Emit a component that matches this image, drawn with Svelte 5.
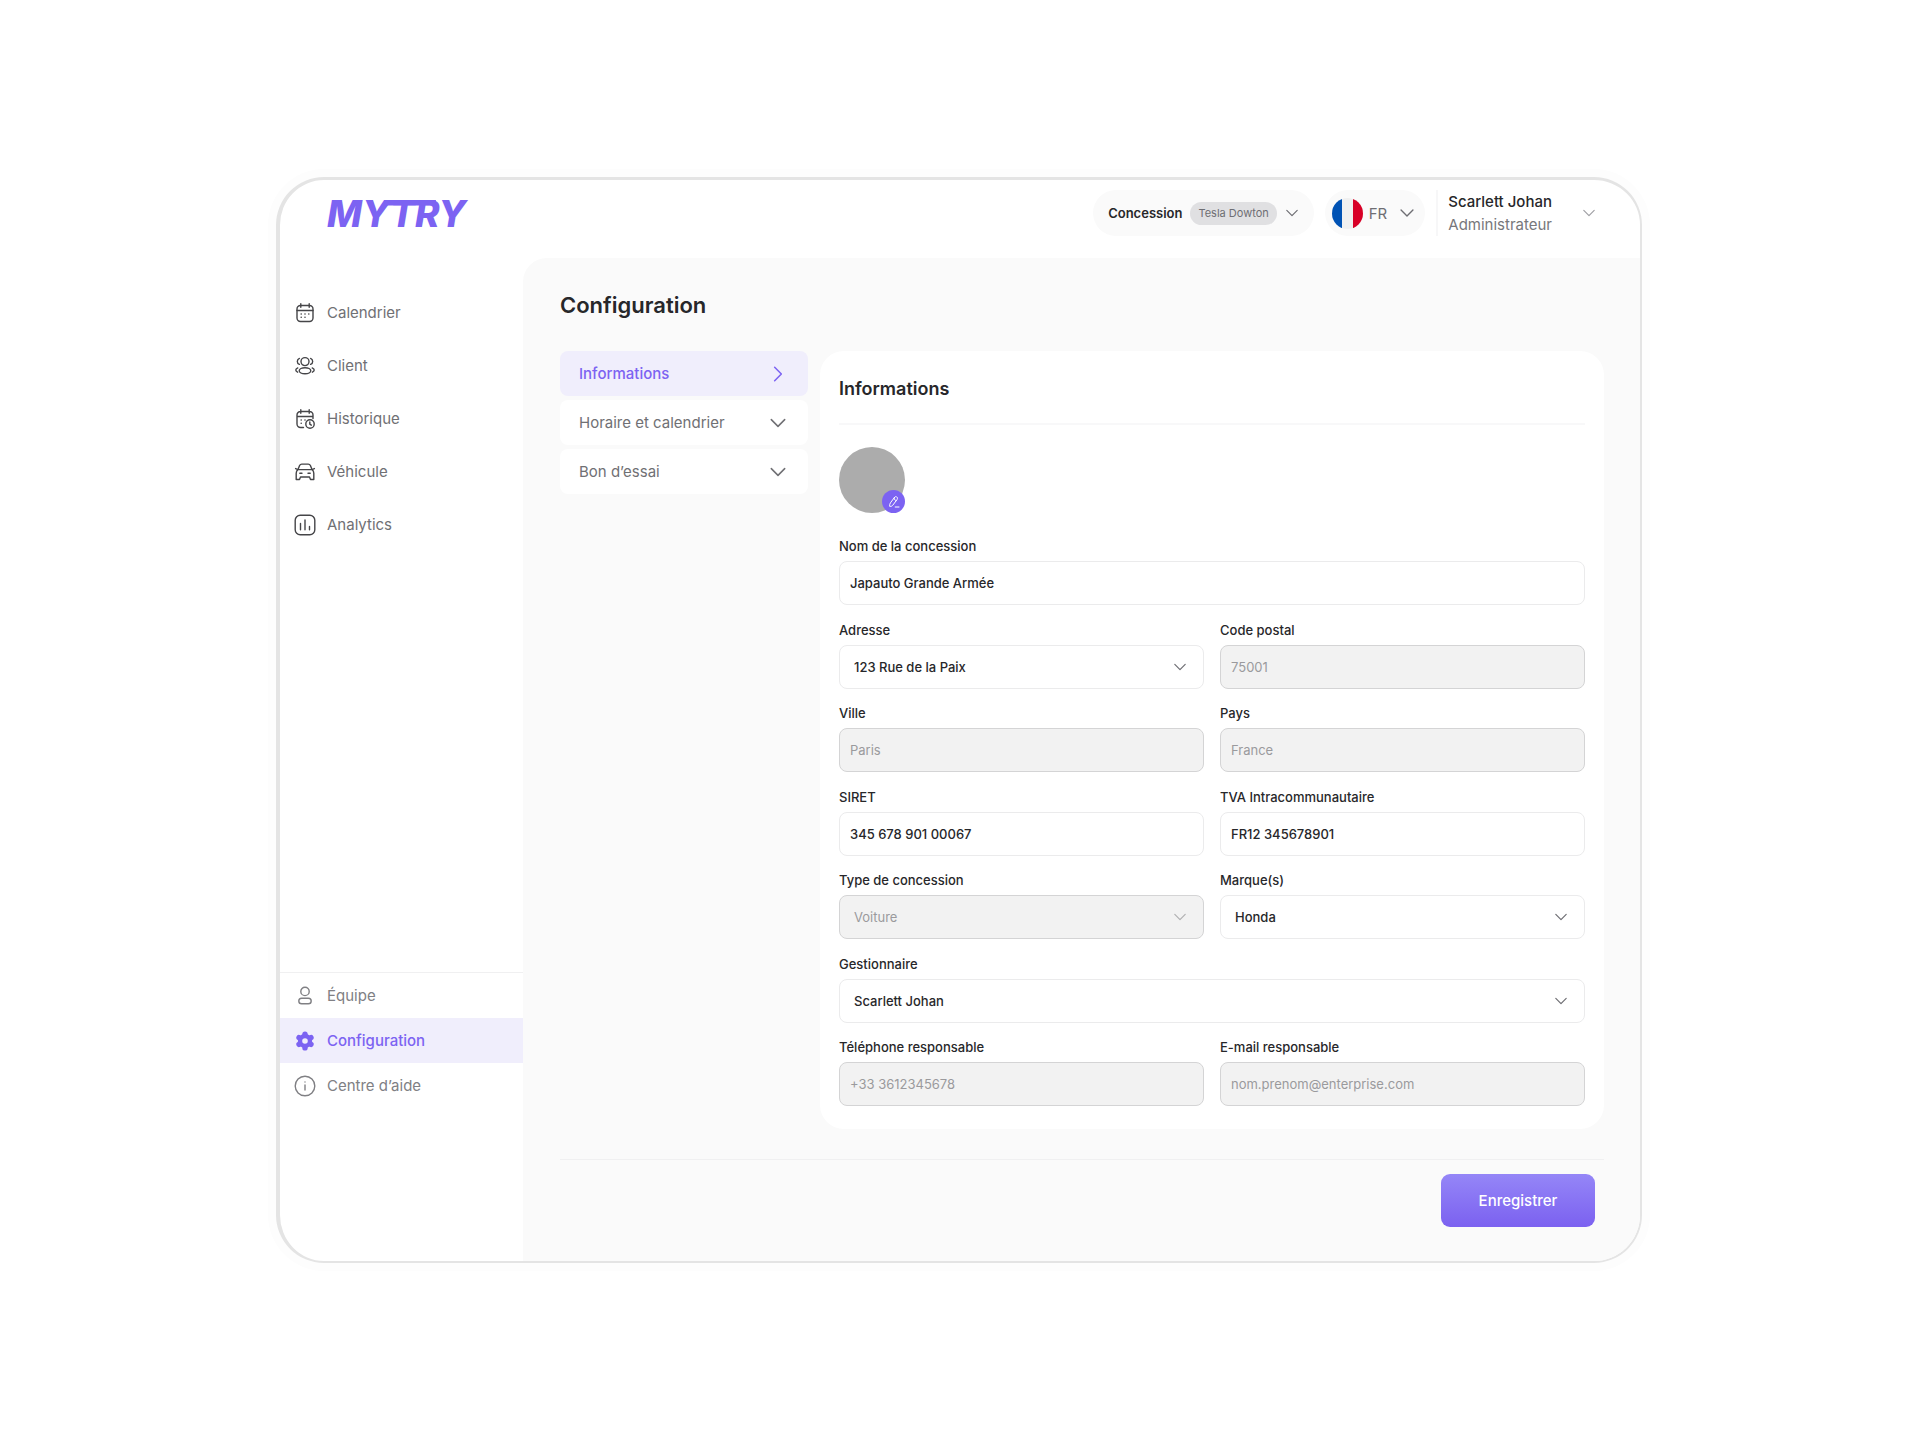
<script>
    const mainLinks = [
        { label: 'Calendrier', icon: 'calendar' },
        { label: 'Client', icon: 'users' },
        { label: 'Historique', icon: 'history' },
        { label: 'Véhicule', icon: 'car' },
        { label: 'Analytics', icon: 'chart' }
    ];
    const footLinks = [
        { label: 'Équipe', icon: 'user' },
        { label: 'Configuration', icon: 'gear' },
        { label: 'Centre d’aide', icon: 'info' }
    ];
    const sections = ['Informations', 'Horaire et calendrier', 'Bon d’essai'];
    const fields = [
        { id: 'nom', label: 'Nom de la concession', value: 'Japauto Grande Armée', wide: true },
        { id: 'adresse', label: 'Adresse', value: '123 Rue de la Paix', select: true },
        { id: 'cp', label: 'Code postal', value: '75001', disabled: true },
        { id: 'ville', label: 'Ville', value: 'Paris', disabled: true },
        { id: 'pays', label: 'Pays', value: 'France', disabled: true },
        { id: 'siret', label: 'SIRET', value: '345 678 901 00067' },
        { id: 'tva', label: 'TVA Intracommunautaire', value: 'FR12 345678901' },
        { id: 'type', label: 'Type de concession', value: 'Voiture', select: true, disabled: true },
        { id: 'marques', label: 'Marque(s)', value: 'Honda', select: true },
        { id: 'gestionnaire', label: 'Gestionnaire', value: 'Scarlett Johan', select: true, wide: true },
        { id: 'tel', label: 'Téléphone responsable', value: '+33 3612345678', disabled: true },
        { id: 'email', label: 'E-mail responsable', value: 'nom.prenom@enterprise.com', disabled: true }
    ];

    let activeLink = $state('Configuration');
    let activeSection = $state('Informations');

    const openLink = (event, label) => {
        event.preventDefault();
        activeLink = label;
    }
</script>

{#snippet chevron(size)}
    <svg class="chevron" width={size} height={size} viewBox="0 0 14 14" aria-hidden="true">
        <path d="M1.800 4.400 7 9.600l5.200-5.200" />
    </svg>
{/snippet}

{#snippet icon(name)}
    <svg class="icon" width="22" height="22" viewBox="0 0 22 22" aria-hidden="true">
        {#if name === 'calendar'}
            <rect x="3" y="3.500" width="16" height="16" rx="3.500" />
            <path d="M3 8.500h16M6.800 1.800v3.400M15.200 1.800v3.400" />
            <path class="dots" d="M7.200 12h.01M11 12h.01M14.800 12h.01M7.200 15.300h.01M11 15.300h.01" />
        {:else if name === 'users'}
            <circle cx="11" cy="6.600" r="4" />
            <ellipse cx="11" cy="15.800" rx="5.800" ry="3" />
            <path d="M5.400 3.400a3.200 3.200 0 0 0 0 6M16.600 3.400a3.200 3.200 0 0 1 0 6M3.800 12.900c-1.300.5-2 1.300-2 2.200s.7 1.600 1.800 2.100M18.200 12.900c1.300.5 2 1.300 2 2.200s-.7 1.600-1.800 2.100" />
        {:else if name === 'history'}
            <path d="M9.500 19.500h-3A3.500 3.500 0 0 1 3 16V7a3.500 3.500 0 0 1 3.500-3.500h9A3.500 3.500 0 0 1 19 7v3.500M3 8.500h16M6.800 1.800v3.400M15.200 1.800v3.400" />
            <path class="dots" d="M7.200 12h.01M11 12h.01M7.200 15.300h.01" />
            <circle cx="16" cy="16" r="4.200" />
            <path d="M15.800 14v2.200l1.500 1" />
        {:else if name === 'car'}
            <path d="M4 8.600 5.600 4.500a2.400 2.400 0 0 1 2.200-1.400h6.400a2.400 2.400 0 0 1 2.200 1.400l1.600 4.100M1.600 7.600l2.400 1h14l2.400-1M4 8.600c-1.300.8-1.800 2-1.800 3.600v6.300h3.300l1-2.500h9l1 2.500h3.300v-6.300c0-1.600-.5-2.800-1.800-3.600M5.800 12.300h2.200M14 12.300h2.200" />
        {:else if name === 'chart'}
            <rect x="1.200" y="1.200" width="19.600" height="19.600" rx="5" />
            <path d="M6.500 9.500v6.300M11 6v9.800M15.500 12.500v3.300" />
        {:else if name === 'user'}
            <circle cx="11" cy="6.400" r="4.200" />
            <rect x="4.800" y="13.200" width="12.400" height="5.600" rx="2.800" />
        {:else if name === 'gear'}
            <circle class="ring" cx="11" cy="11" r="5" />
            {#each [0, 60, 120, 180, 240, 300] as angle}
                <circle class="solid" cx="11" cy="4.100" r="2.700" transform="rotate({angle} 11 11)" />
            {/each}
        {:else}
            <circle cx="11" cy="11" r="9.800" />
            <path d="M11 10v5M11 7h.01" />
        {/if}
    </svg>
{/snippet}

<div class="stage">
    <div class="window">
        <header class="topbar">
            <a class="logo" href="#accueil" aria-label="MYTRY">
                <svg width="150" height="48" viewBox="0 0 150 48">
                    <text x="1" y="37">MYTRY</text>
                    <path d="M64 10h46l-1 5.500H60z" />
                </svg>
            </a>
            <div class="tools">
                <button class="pill concession">
                    <span class="strong">Concession</span>
                    <span class="tag">Tesla Dowton</span>
                    {@render chevron(14)}
                </button>
                <button class="pill lang">
                    <svg class="flag" width="31" height="31" viewBox="0 0 31 31" aria-hidden="true">
                        <clipPath id="flag-clip"><circle cx="15.500" cy="15.500" r="15.500" /></clipPath>
                        <g clip-path="url(#flag-clip)">
                            <path fill="#f0f0f0" d="M0 0h31v31H0z" />
                            <path fill="#0052b4" d="M0 0h10v31H0z" />
                            <path fill="#d80027" d="M21 0h10v31H21z" />
                        </g>
                    </svg>
                    <span>FR</span>
                    {@render chevron(16)}
                </button>
                <button class="account">
                    <span class="who">
                        <span class="name">Scarlett Johan</span>
                        <span class="role">Administrateur</span>
                    </span>
                    {@render chevron(14)}
                </button>
            </div>
        </header>

        <aside class="sidebar">
            <nav class="links">
                {#each mainLinks as link}
                    <a href="#{link.icon}" class:active={activeLink === link.label} onclick={(e) => openLink(e, link.label)}>
                        {@render icon(link.icon)}{link.label}
                    </a>
                {/each}
            </nav>
            <nav class="links foot">
                {#each footLinks as link}
                    <a href="#{link.icon}" class:active={activeLink === link.label} onclick={(e) => openLink(e, link.label)}>
                        {@render icon(link.icon)}{link.label}
                    </a>
                {/each}
            </nav>
        </aside>

        <main class="content">
            <h1>Configuration</h1>
            <div class="panels">
                <div class="sections">
                    {#each sections as section}
                        <button class="section" class:active={activeSection === section} onclick={() => activeSection = section}>
                            {section}
                            {@render chevron(18)}
                        </button>
                    {/each}
                </div>
                <section class="card">
                    <h2>Informations</h2>
                    <div class="avatar">
                        <button class="edit" aria-label="Modifier">
                            <svg width="14" height="14" viewBox="0 0 14 14" aria-hidden="true">
                                <path d="M7.600 2.300 3.400 7.900c-.6.900-.9 2-.7 3.500 1.500.2 2.400-.3 3.100-1.200l4.200-5.600c.8-1.100.6-2-.2-2.600s-1.500-.6-2.200.3zM7 3.300c.3 1.300 1 2 2.200 2.300M8.200 12h3.800" />
                            </svg>
                        </button>
                    </div>
                    <form class="fields" id="config">
                        {#each fields as field}
                            <div class="field" class:wide={field.wide}>
                                <label for={field.id}>{field.label}</label>
                                {#if field.select}
                                    <div class="select" class:disabled={field.disabled}>
                                        <select id={field.id} disabled={field.disabled}>
                                            <option>{field.value}</option>
                                        </select>
                                        {@render chevron(14)}
                                    </div>
                                {:else}
                                    <input id={field.id} type="text" value={field.value} disabled={field.disabled} />
                                {/if}
                            </div>
                        {/each}
                    </form>
                </section>
            </div>
            <div class="actions">
                <button class="save" type="submit" form="config">Enregistrer</button>
            </div>
        </main>
    </div>
</div>

<style>
    :global(body) {
        background: #fff;
    }
    .stage {
        box-sizing: border-box;
        display: flex;
        min-height: 100vh;
        padding: 177px 278px 177px 276px;
        font-family: Inter, "Liberation Sans", sans-serif;
        font-size: 15px;
        color: #27272a;
    }
    .stage :global(*) {
        box-sizing: border-box;
    }
    .window {
        flex: 1;
        display: grid;
        grid-template:
        "top  top    " 78px
        "side content" 1fr
        / 243px 1fr;
        border: 2px solid #e4e4e4;
        border-top-width: 3px;
        border-left-width: 4px;
        border-radius: 48px;
        box-shadow: 0 0 0 8px #fdfdfd;
        background: #fff;
        overflow: hidden;
    }
    button {
        border: 0;
        background: none;
        font: inherit;
        color: inherit;
        cursor: pointer;
    }
    svg {
        flex: none;
        fill: none;
        stroke: currentColor;
        stroke-linecap: round;
        stroke-linejoin: round;
    }
    .chevron {
        stroke-width: 1.2;
    }

    /* En-tête */
    .topbar {
        grid-area: top;
        display: flex;
        align-items: flex-start;
        justify-content: space-between;
        padding: 10px 44px 0 46px;
    }
    .logo svg {
        display: block;
        fill: #7c63f2;
        stroke: none;
    }
    .logo text {
        font-size: 37px;
        font-weight: 800;
        font-style: italic;
    }
    .tools {
        display: flex;
        gap: 11px;
    }
    .pill {
        display: flex;
        align-items: center;
        height: 46px;
        border-radius: 23px;
        background: #fafafa;
        color: #6e6e73;
    }
    .concession {
        gap: 8px;
        padding: 0 15px;
        font-size: 13px;
    }
    .strong {
        font-weight: 600;
        color: #27272a;
    }
    .tag {
        padding: 0 8px;
        border-radius: 12px;
        background: #e0e0e2;
        font-size: 11px;
        line-height: 23px;
    }
    .lang {
        gap: 6px;
        padding: 0 10px 0 7px;
        font-size: 15px;
    }
    .lang .chevron {
        margin-left: 6px;
    }
    .flag {
        stroke: none;
    }
    .account {
        display: flex;
        align-items: center;
        gap: 30px;
        height: 46px;
        padding: 0 0 0 10px;
        border-left: 2px solid #f7f7f8;
        text-align: left;
        line-height: 23px;
        color: #77777b;
    }
    .name,
    .role {
        display: block;
    }
    .name {
        font-weight: 500;
        color: #27272a;
    }
    .account .chevron {
        color: #a0a0a4;
    }

    /* Navigation */
    .sidebar {
        grid-area: side;
        display: flex;
        flex-direction: column;
        padding-top: 28px;
    }
    .links {
        display: flex;
        flex-direction: column;
    }
    .links a {
        display: flex;
        align-items: center;
        gap: 11px;
        height: 53px;
        padding-left: 14px;
        color: #707074;
        text-decoration: none;
    }
    .icon {
        color: #454548;
        stroke-width: 1.4;
    }
    .dots {
        stroke-width: 1.6;
    }
    .ring {
        stroke-width: 4.4;
    }
    .solid {
        fill: currentColor;
        stroke: none;
    }
    .foot {
        margin-top: auto;
        margin-bottom: 153px;
        border-top: 1px solid #f0f0f1;
    }
    .foot a {
        height: 45px;
        color: #808084;
    }
    .foot .icon {
        color: #808084;
    }
    .foot .active,
    .foot .active .icon {
        color: #7c63f2;
    }
    .links .active {
        background: #f0eefc;
        font-weight: 500;
    }

    /* Contenu */
    .content {
        grid-area: content;
        display: flex;
        flex-direction: column;
        padding: 33px 36px 34px 37px;
        border-top-left-radius: 24px;
        background: #fafafa;
    }
    h1 {
        margin: 0 0 32px;
        font-size: 22px;
        font-weight: 600;
        line-height: 28px;
    }
    .panels {
        flex: 1;
        display: grid;
        grid-template-columns: 248px 1fr;
        gap: 12px;
    }
    .sections {
        display: flex;
        flex-direction: column;
        gap: 4px;
    }
    .section {
        display: flex;
        align-items: center;
        justify-content: space-between;
        height: 45px;
        padding: 0 21px 0 19px;
        border-radius: 8px;
        background: #fff;
        color: #707074;
    }
    .section.active {
        background: #f0eefc;
        color: #7c63f2;
        font-weight: 500;
    }
    .section.active .chevron {
        transform: rotate(-90deg);
    }
    .card {
        display: flex;
        flex-direction: column;
        padding: 25px 19px 23px;
        border-radius: 24px;
        background: #fff;
    }
    h2 {
        margin: 0 0 22px;
        padding-bottom: 22px;
        border-bottom: 2px solid #f8f8f9;
        font-size: 18px;
        font-weight: 600;
        line-height: 25px;
    }
    .avatar {
        position: relative;
        width: 66px;
        height: 66px;
        margin-bottom: 24px;
        border-radius: 50%;
        background: #acacac;
    }
    .edit {
        position: absolute;
        right: 0;
        bottom: 0;
        display: flex;
        align-items: center;
        justify-content: center;
        width: 23px;
        height: 23px;
        padding: 0;
        border-radius: 50%;
        background: #7c63f2;
        color: #fff;
    }
    .fields {
        flex: 1;
        display: grid;
        grid-template-columns: 1fr 1fr;
        column-gap: 16px;
        align-content: space-between;
        font-size: 13px;
        font-weight: 500;
    }
    .wide {
        grid-column: span 2;
    }
    label {
        display: block;
        margin-bottom: 6px;
        line-height: 18px;
    }
    .select {
        position: relative;
    }
    input,
    select {
        display: block;
        width: 100%;
        height: 44px;
        margin: 0;
        padding: 0 10px;
        border: 1px solid #ebebec;
        border-radius: 8px;
        background: #fff;
        font: inherit;
        color: #27272a;
        appearance: none;
    }
    select {
        padding: 0 14px;
    }
    input:disabled,
    select:disabled {
        border-color: #d4d4d5;
        background: #f2f2f2;
        color: #9a9a9d;
        font-weight: 400;
        opacity: 1;
    }
    .select .chevron {
        position: absolute;
        top: 15px;
        right: 17px;
        color: #6e6e73;
        pointer-events: none;
    }
    .select.disabled .chevron {
        color: #b0b0b2;
    }

    .actions {
        display: flex;
        justify-content: flex-end;
        margin-top: 30px;
        padding: 14px 9px 0 0;
        border-top: 1px solid #f0f0f1;
    }
    .save {
        width: 154px;
        height: 53px;
        border-radius: 9px;
        background: linear-gradient(#9586f7, #7b61f0);
        color: #fff;
        font-weight: 500;
    }
</style>
